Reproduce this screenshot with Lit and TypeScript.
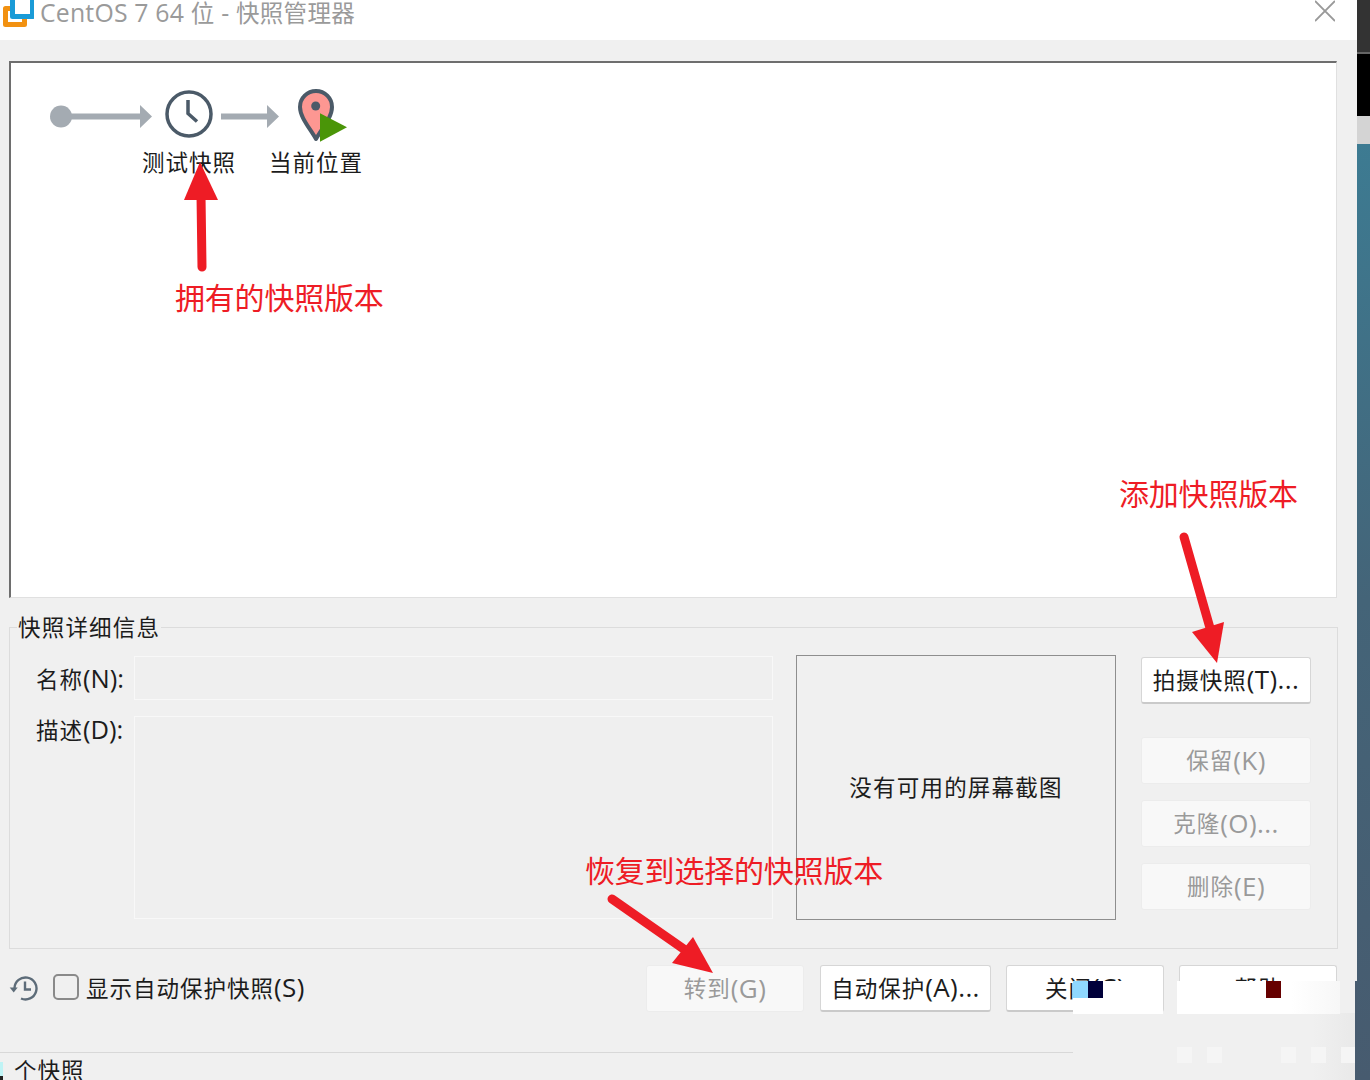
import { LitElement, html, css, svg } from "lit";
import { customElement } from "lit/decorators.js";

const FONT = css`"Open Sans", "Noto Sans CJK SC", sans-serif`;

/* The reference sets Latin runs larger than the CJK runs, so each run gets its own span. */
function runs(text: string) {
  return text.split(/([\x00-\x7f]+)/).filter(Boolean).map((part) =>
    /^[\x00-\x7f]+$/.test(part) ? html`<span class="la">${part}</span>` : html`<span class="zh">${part}</span>`);
}

@customElement("app-root")
export class AppRoot extends LitElement {
  static styles = css`
    :host { display: block; width: 1370px; height: 1080px; font-family: ${FONT}; font-size: 22.5px; color: #1c1c1c; }
    * { box-sizing: border-box; }
    .zh { letter-spacing: 1px; }
    .la { font-size: 26px; line-height: 1; letter-spacing: 0.4px; }
    .root { position: relative; width: 1370px; height: 1080px; overflow: hidden; display: grid; grid-template-columns: 1357px 13px; }
    .win { background: #f0f0f0; display: flex; flex-direction: column; height: 1080px; overflow: hidden; }
    .titlebar { height: 40px; flex: none; background: #fff; display: flex; align-items: flex-start; padding: 0 22px 0 0; overflow: hidden; }
    .logo { width: 34px; height: 28px; flex: none; }
    .title { margin-left: 6px; line-height: 21px; font-size: 23.5px; color: #9a9a9a; white-space: nowrap; flex: 1; }
    .title .la { font-size: 24.8px; letter-spacing: 0.2px; }
    .title .zh { letter-spacing: 0.3px; }
    .close { width: 20px; height: 22px; flex: none; }
    .tree { position: relative; flex: none; margin: 21px 0 0 9px; width: 1328px; height: 537px; background: #fff;
      border-top: 2px solid #6e6e6e; border-left: 2px solid #6e6e6e; border-right: 1px solid #e0e0e0; border-bottom: 1px solid #e0e0e0; }
    .tree svg { position: absolute; left: -11px; top: -63px; width: 400px; height: 200px; }
    .node { position: absolute; top: 85px; width: 110px; text-align: center; line-height: 30px; white-space: nowrap; }
    .node.a { left: 123px; }
    .node.b { left: 250px; }
    .group { position: relative; flex: none; margin: 29px 0 0 9px; width: 1329px; height: 322px; border: 1px solid #dcdcdc;
      display: grid; grid-template-columns: 87px 639px 320px 171px; padding: 27px 0 0 26px; align-items: start; }
    .legend { position: absolute; left: 7px; top: -14px; line-height: 28px; background: #f0f0f0; padding: 0 1px; }
    .legend .zh { letter-spacing: 1.2px; }
    .labels { display: flex; flex-direction: column; margin-top: 9px; }
    .labels div { line-height: 32px; white-space: nowrap; }
    .labels div + div { margin-top: 19px; }
    .labels .la { font-size: 25.5px; letter-spacing: 0; }
    .fields { margin: 1px 0 0 11px; width: 639px; display: flex; flex-direction: column; gap: 16px; }
    .field { border: 1px solid #f8f8f8; background: #efefef; }
    .field.n { height: 44px; }
    .field.d { height: 203px; }
    .shot { margin-left: 34px; width: 320px; height: 265px; padding-bottom: 2px; border: 1px solid #8e8e8e; display: flex; align-items: center; justify-content: center; white-space: nowrap; }
    .shot .zh { letter-spacing: 1.2px; }
    .side { margin: 2px 0 0 59px; width: 170px; display: flex; flex-direction: column; gap: 17px; }
    .side .btn:first-child { margin-bottom: 16px; }
    .btn { height: 47px; flex: none; padding-bottom: 2px; display: flex; align-items: center; justify-content: center; white-space: nowrap; background: #fff; border: 1px solid #d6d6d6; border-bottom: 2px solid #cacaca; border-radius: 3px; }
    .btn.off { background: #f8f8f8; border: 1px solid #ececec; color: #9a9a9a; }
    .side .btn.off + .btn.off { margin-top: -1px; }
    .footer { flex: none; height: 103px; padding: 16px 20px 0 9px; display: flex; align-items: flex-start; }
    .check { display: flex; align-items: center; height: 44px; flex: 1; white-space: nowrap; }
    .check svg { width: 29px; height: 27px; flex: none; }
    .box { width: 26px; height: 26px; flex: none; margin: 0 7px 0 15px; border: 2px solid #8a8a8a; border-radius: 5px; }
    .go { width: 158px; }
    .auto { width: 171px; margin-left: 16px; }
    .shut { width: 158px; margin-left: 15px; }
    .help { width: 158px; margin-left: 15px; }
    .status { flex: none; border-top: 1px solid #d8d8d8; padding-left: 14px; line-height: 36px; }
    .strip { background: linear-gradient(#3d7b92 143px, #446478 600px, #475b6f); display: flex; flex-direction: column; }
    .strip i { display: block; flex: none; }
    .s1 { height: 52px; background: #333; }
    .s2 { height: 64px; background: #000; border-top: 2px solid #666; }
    .s3 { height: 28px; background: #d4d4d4; }
    .ann { position: absolute; color: #ee1c25; font-size: 30px; line-height: 40px; white-space: nowrap; letter-spacing: -0.2px; }
    .ann.t1 { left: 175px; top: 278px; }
    .ann.t2 { left: 1119px; top: 474px; }
    .ann.t3 { left: 585px; top: 851px; }
    .arrows { position: absolute; left: 0; top: 0; width: 1370px; height: 1080px; pointer-events: none; }
    .patch { position: absolute; }
    .p-bg { left: 1073px; top: 1013px; width: 282px; height: 67px; background: linear-gradient(90deg, #f0f0f0 85%, #e9e9e9); }
    .p-w1 { left: 1073px; top: 981px; width: 90px; height: 33px; background: #fff; }
    .p-w2 { left: 1177px; top: 981px; width: 163px; height: 33px; background: linear-gradient(90deg, #fff 70%, #f7f7f7); }
    .p-c1 { left: 1073px; top: 981px; width: 15px; height: 17px; background: #8fd8ff; }
    .p-c2 { left: 1088px; top: 981px; width: 15px; height: 17px; background: #00003a; }
    .p-c3 { left: 1266px; top: 981px; width: 15px; height: 17px; background: #660000; }
    .sq { top: 1047px; width: 15px; height: 16px; background: #f5f5f5; }
    .q1 { left: 1177px; } .q2 { left: 1207px; } .q3 { left: 1281px; } .q4 { left: 1311px; } .q5 { left: 1341px; width: 14px; }
    .edge { left: 1355px; top: 981px; width: 2px; height: 99px; background: #475b6f; }
    .tick { left: 0; top: 1062px; width: 3px; height: 14px; background: #bff3f5; }
    .tick2 { left: 0; top: 1076px; width: 3px; height: 4px; background: #222; }
  `;

  private arrow(x: number, tipW: number) {
    return svg`<polygon points="${x},113.5 ${x + tipW},113.5 ${x + tipW},105 ${x + tipW + 12},116.5 ${x + tipW},128 ${x + tipW},119.5 ${x},119.5" fill="#a4abb2"/>`;
  }

  render() {
    const INK = "#4b5a68";
    const HIST = "#5d6c79";
    return html`<div class="root">
      <div class="win">
        <div class="titlebar">
          <svg class="logo" viewBox="0 0 34 28">
            <path d="M12 8.500H5.500V24.500H24.500V17" fill="none" stroke="#f29111" stroke-width="5" stroke-linejoin="round"/>
            <path d="M12.500 0V16.500H32.500V0" fill="none" stroke="#1a9bd7" stroke-width="5" stroke-linejoin="round"/>
          </svg>
          <div class="title">${runs("CentOS 7 64 位 - 快照管理器")}</div>
          <svg class="close" viewBox="0 0 20 22"><path d="M0 1L20 21M20 1L0 21" stroke="#999" stroke-width="1.800"/></svg>
        </div>

        <div class="tree">
          <svg viewBox="0 0 400 200">
            <circle cx="61" cy="116.500" r="11" fill="#a4abb2"/>
            ${this.arrow(70, 70)}
            <circle cx="189" cy="114" r="22" fill="#fff" stroke="${INK}" stroke-width="3.500"/>
            <path d="M188 100V113.500L197 121.500" fill="none" stroke="${INK}" stroke-width="3.500"/>
            ${this.arrow(221, 46)}
            <path d="M316 139C309 127 300 117 300 107A16 16 0 0 1 332 107C332 117 323 127 316 139Z" fill="#fd9792" stroke="${INK}" stroke-width="4" stroke-linejoin="round"/>
            <circle cx="315.700" cy="106" r="4.500" fill="${INK}"/>
            <polygon points="320,113.300 347,127.300 320,141.700" fill="#4a9508"/>
          </svg>
          <div class="node a">${runs("测试快照")}</div>
          <div class="node b">${runs("当前位置")}</div>
        </div>

        <div class="group">
          <div class="legend">${runs("快照详细信息")}</div>
          <div class="labels"><div>${runs("名称(N):")}</div><div>${runs("描述(D):")}</div></div>
          <div class="fields"><div class="field n"></div><div class="field d"></div></div>
          <div class="shot">${runs("没有可用的屏幕截图")}</div>
          <div class="side">
            <div class="btn">${runs("拍摄快照(T)...")}</div>
            <div class="btn off">${runs("保留(K)")}</div>
            <div class="btn off">${runs("克隆(O)...")}</div>
            <div class="btn off">${runs("删除(E)")}</div>
          </div>
        </div>

        <div class="footer">
          <div class="check">
            <svg viewBox="0 0 29 27">
              <path d="M5.500 14A11 11 0 1 1 12 24.500" fill="none" stroke="${HIST}" stroke-width="2.400"/>
              <path d="M0.700 13.500H8.700L4.700 18.500Z" fill="${HIST}"/>
              <path d="M16 7.500V15.500H22" fill="none" stroke="${HIST}" stroke-width="2.400"/>
            </svg>
            <div class="box"></div>
            <span>${runs("显示自动保护快照(S)")}</span>
          </div>
          <div class="btn off go">${runs("转到(G)")}</div>
          <div class="btn auto">${runs("自动保护(A)...")}</div>
          <div class="btn shut">${runs("关闭(C)")}</div>
          <div class="btn help">${runs("帮助")}</div>
        </div>

        <div class="status">${runs("个快照")}</div>
      </div>

      <div class="strip"><i class="s1"></i><i class="s2"></i><i class="s3"></i></div>

      <div class="patch p-bg"></div>
      <div class="patch p-w1"></div>
      <div class="patch p-w2"></div>
      <div class="patch p-c1"></div>
      <div class="patch p-c2"></div>
      <div class="patch p-c3"></div>
      <div class="patch sq q1"></div>
      <div class="patch sq q2"></div>
      <div class="patch sq q3"></div>
      <div class="patch sq q4"></div>
      <div class="patch sq q5"></div>
      <div class="patch edge"></div>
      <div class="patch tick"></div>
      <div class="patch tick2"></div>

      <svg class="arrows" viewBox="0 0 1370 1080">
        <g stroke="#ee1c25" stroke-width="9" stroke-linecap="round" fill="none">
          <path d="M202 267L201 195"/>
          <path d="M1184 537L1212 635"/>
          <path d="M612 899L688 952"/>
        </g>
        <g fill="#ee1c25">
          <polygon points="200,162 218,200 184,200"/>
          <polygon points="1217,663 1192,632 1224,622"/>
          <polygon points="713,973 672,963 693,937"/>
        </g>
      </svg>
      <div class="ann t1">拥有的快照版本</div>
      <div class="ann t2">添加快照版本</div>
      <div class="ann t3">恢复到选择的快照版本</div>
    </div>`;
  }
}
